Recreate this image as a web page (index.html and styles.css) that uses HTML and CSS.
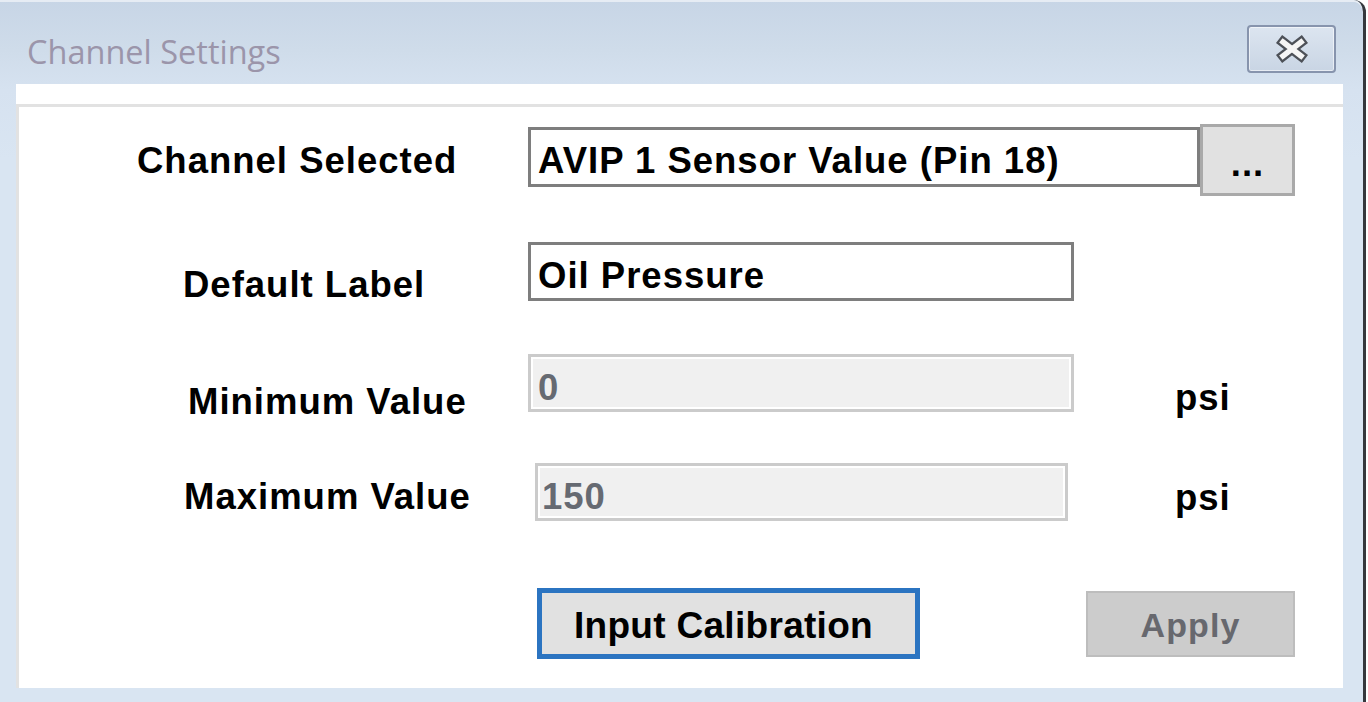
FILE: index.html
```html
<!DOCTYPE html>
<html lang="en">
<head>
<meta charset="utf-8">
<title>Channel Settings</title>
<link rel="stylesheet" href="styles.css">
</head>
<body>
<div class="window">
  <div class="titlebar">
    <div class="title">Channel Settings</div>
    <button class="close" aria-label="Close">
      <svg width="36" height="28" viewBox="0 0 36 28">
        <path d="M9 7 L27 21 M27 7 L9 21" stroke="#4d5158" stroke-width="10" stroke-linecap="square" fill="none"/>
        <path d="M9 7 L27 21 M27 7 L9 21" stroke="#f5f5f5" stroke-width="5.5" stroke-linecap="square" fill="none"/>
      </svg>
    </button>
  </div>
  <div class="client">
    <div class="client-strip"></div>
    <div class="panel">
      <div class="row row-channel">
        <div class="lbl lbl-channel">Channel Selected</div>
        <div class="field field-channel">AVIP 1 Sensor Value (Pin 18)</div>
        <button class="browse">...</button>
      </div>
      <div class="row row-label">
        <div class="lbl lbl-default">Default Label</div>
        <div class="field field-label">Oil Pressure</div>
      </div>
      <div class="row row-min">
        <div class="lbl lbl-min">Minimum Value</div>
        <div class="field field-disabled field-min">0</div>
        <div class="unit unit-min">psi</div>
      </div>
      <div class="row row-max">
        <div class="lbl lbl-max">Maximum Value</div>
        <div class="field field-disabled field-max">150</div>
        <div class="unit unit-max">psi</div>
      </div>
      <div class="row row-actions">
        <button class="btn btn-calibrate">Input Calibration</button>
        <button class="btn btn-apply" disabled>Apply</button>
      </div>
    </div>
  </div>
</div>
</body>
</html>
```

FILE: styles.css
```css
* {
  box-sizing: border-box;
}

body {
  margin: 0;
  background: #ffffff;
  font-family: "Liberation Sans", Arial, sans-serif;
}

.window {
  width: 1366px;
  height: 702px;
  display: flex;
  flex-direction: column;
  background: linear-gradient(#c7d5e6 0px, #cfdcea 50px, #d6e2f0 90px, #d9e5f2 160px, #d9e5f2 100%);
  border-right: 3px solid #35383d;
  border-top-right-radius: 12px;
  box-shadow: inset 0 2px 0 rgba(255, 255, 255, 0.55);
  overflow: hidden;
}

.titlebar {
  flex: none;
  height: 84px;
  display: flex;
  justify-content: space-between;
  align-items: flex-start;
}

.title {
  padding: 32px 0 0 27px;
  font-family: "Open Sans", "Noto Sans", sans-serif;
  font-size: 32.5px;
  line-height: 40px;
  color: #9b95aa;
}

.close {
  margin: 25px 27px 0 0;
  width: 89px;
  height: 48px;
  padding: 0;
  border: 2px solid #8794ad;
  border-radius: 4px;
  background: linear-gradient(#dce5f0, #c9d5e4);
  box-shadow: inset 0 0 0 1px rgba(255, 255, 255, 0.55);
  display: flex;
  align-items: center;
  justify-content: center;
}

.client {
  flex: none;
  height: 604px;
  margin: 0 20px 0 16px;
  background: #ffffff;
  display: flex;
  flex-direction: column;
}

.client-strip {
  flex: none;
  height: 20px;
}

.panel {
  flex: 1;
  border-top: 3px solid #e2e2e2;
  border-left: 3px solid #e2e2e2;
  padding-top: 17px;
}

.row {
  display: flex;
  align-items: flex-start;
}

.row-channel {
  height: 72px;
  padding-left: 118px;
}

.row-label {
  height: 59px;
  margin-top: 46px;
  padding-left: 164px;
}

.row-min {
  height: 58px;
  margin-top: 53px;
  padding-left: 169px;
}

.row-max {
  height: 58px;
  margin-top: 51px;
  padding-left: 165px;
}

.row-actions {
  height: 71px;
  margin-top: 67px;
  padding-left: 518px;
}

.lbl,
.unit {
  flex: none;
  font-weight: bold;
  font-size: 36.5px;
  line-height: 40px;
  letter-spacing: 1px;
  color: #000000;
  white-space: nowrap;
}

.lbl-channel {
  width: 391px;
  margin-top: 17px;
}

.lbl-default {
  width: 345px;
  margin-top: 23px;
}

.lbl-min {
  width: 340px;
  margin-top: 28px;
}

.lbl-max {
  width: 351px;
  margin-top: 14px;
}

.field {
  flex: none;
  font-weight: bold;
  font-size: 36.5px;
  line-height: 40px;
  letter-spacing: 1px;
  color: #000000;
  white-space: nowrap;
  overflow: hidden;
  padding-left: 7px;
  background: #ffffff;
  border: 3px solid #7e7e7e;
}

.field-channel {
  width: 672px;
  height: 60px;
  margin-top: 3px;
  padding-top: 11px;
}

.field-label {
  width: 546px;
  height: 59px;
  padding-top: 11px;
}

.field-disabled {
  border-color: #cbcbcb;
  background: #f0f0f0;
  box-shadow: inset 0 0 0 2px #ffffff;
  color: #666a72;
}

.field-min {
  width: 546px;
  height: 58px;
  padding-top: 11px;
}

.field-max {
  width: 533px;
  height: 58px;
  padding-top: 11px;
  padding-left: 4px;
}

.unit-min {
  margin: 24px 0 0 101px;
}

.unit-max {
  margin: 15px 0 0 107px;
}

.browse {
  flex: none;
  width: 95px;
  height: 72px;
  border: 3px solid #a9a9a9;
  background: #e1e1e1;
  display: flex;
  justify-content: center;
  align-items: flex-start;
  padding: 17px 0 0 0;
  font-family: inherit;
  font-weight: bold;
  font-size: 36.5px;
  line-height: 40px;
  letter-spacing: 1px;
  color: #000000;
}

.btn {
  flex: none;
  display: flex;
  justify-content: center;
  align-items: flex-start;
  font-family: inherit;
  font-weight: bold;
  white-space: nowrap;
}

.btn-calibrate {
  width: 383px;
  height: 71px;
  border: 5px solid #2b74c1;
  background: #e1e1e1;
  padding: 11px 10px 0 0;
  font-size: 37px;
  line-height: 44px;
  letter-spacing: 0.3px;
  color: #000000;
}

.btn-apply {
  width: 209px;
  height: 66px;
  margin: 3px 0 0 166px;
  border: 2px solid #bdbdbd;
  background: #cccccc;
  padding: 12px 0 0 0;
  font-size: 34px;
  line-height: 40px;
  letter-spacing: 1.1px;
  color: #67686e;
}
```
